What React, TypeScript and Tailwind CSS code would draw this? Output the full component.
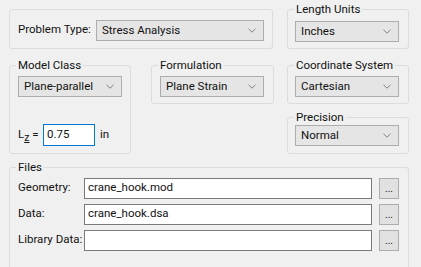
import { ReactNode } from 'react';

// Chevron used by the combo boxes
function Chevron() {
    return (
        <svg width="8" height="5" viewBox="0 0 8 5" className="shrink-0">
            <polyline points="0.5,0.8 4,4.2 7.5,0.8" fill="none" stroke="#808080" strokeWidth="1" />
        </svg>
    );
}

function Combo({ value, className }: { value: string; className: string }) {
    return (
        <div className={`flex items-center justify-between h-[21px] pl-[5px] pr-[7px] bg-[#e5e5e5] border border-[#adadad] ${className}`}>
            <span className="leading-none">{value}</span>
            <Chevron />
        </div>
    );
}

function Group({ title, className, children }: { title?: string; className: string; children: ReactNode }) {
    return (
        <div className={`relative border border-[#dcdcdc] rounded-[3px] ${className}`}>
            {title && (
                <span className="absolute left-[6px] top-[-8px] px-[2px] leading-[14px] bg-[#f0f0f0]">{title}</span>
            )}
            {children}
        </div>
    );
}

function FileRow({ label, value }: { label: string; value: string }) {
    return (
        <div className="flex items-center h-[20px]">
            <span className="w-[66px]">{label}</span>
            <div className="w-[288px] h-[21px] bg-white border border-[#7a7a7a] flex items-center pl-[3px]">{value}</div>
            <div className="ml-[7px] w-[20px] h-[21px] bg-[#e1e1e1] border border-[#adadad] flex items-end justify-center pb-[4px] text-[10px] leading-none">...</div>
        </div>
    );
}

export default function App() {
    return (
        <div
            className="w-[421px] h-[267px] overflow-hidden bg-[#f0f0f0] text-[#111] text-[11.5px] pl-[9px] pt-[9px] whitespace-nowrap"
            style={{ fontFamily: 'Roboto, "Liberation Sans", sans-serif' }}
        >
            {/* Row 1 */}
            <div className="flex">
                <Group className="w-[264px] h-[40px] flex items-center pl-[8px]">
                    <span className="w-[78px] mt-[1px]">Problem Type:</span>
                    <Combo value="Stress Analysis" className="w-[168px] mt-[3px]" />
                </Group>
                <Group title="Length Units" className="ml-[14px] w-[122px] h-[40px] pl-[7px] pt-[11px]">
                    <Combo value="Inches" className="w-[104px]" />
                </Group>
            </div>

            {/* Row 2 */}
            <div className="flex mt-[16px]">
                <Group title="Model Class" className="w-[122px] h-[89px] pl-[8px] pt-[10px]">
                    <Combo value="Plane-parallel" className="w-[104px]" />
                    <div className="flex items-center mt-[27px]">
                        <span className="w-[25px]">
                            L<sub className="underline text-[10.5px]">z</sub> =
                        </span>
                        <div className="w-[52px] h-[22px] bg-white border border-[#0078d7] flex items-center pl-[3px]">0.75</div>
                        <span className="ml-[5px]">in</span>
                    </div>
                </Group>
                <Group title="Formulation" className="ml-[20px] w-[123px] h-[39px] pl-[8px] pt-[10px]">
                    <Combo value="Plane Strain" className="w-[104px]" />
                </Group>
                <div className="ml-[13px] flex flex-col">
                    <Group title="Coordinate System" className="w-[122px] h-[39px] pl-[7px] pt-[10px]">
                        <Combo value="Cartesian" className="w-[104px]" />
                    </Group>
                    <Group title="Precision" className="mt-[13px] w-[122px] h-[37px] pl-[7px] pt-[7px]">
                        <Combo value="Normal" className="w-[104px]" />
                    </Group>
                </div>
            </div>

            {/* Files */}
            <Group title="Files" className="mt-[13px] w-[400px] h-[110px] pl-[8px] pt-[10px]">
                <div className="flex flex-col gap-[6px]">
                    <FileRow label="Geometry:" value="crane_hook.mod" />
                    <FileRow label="Data:" value="crane_hook.dsa" />
                    <FileRow label="Library Data:" value="" />
                </div>
            </Group>
        </div>
    );
}
